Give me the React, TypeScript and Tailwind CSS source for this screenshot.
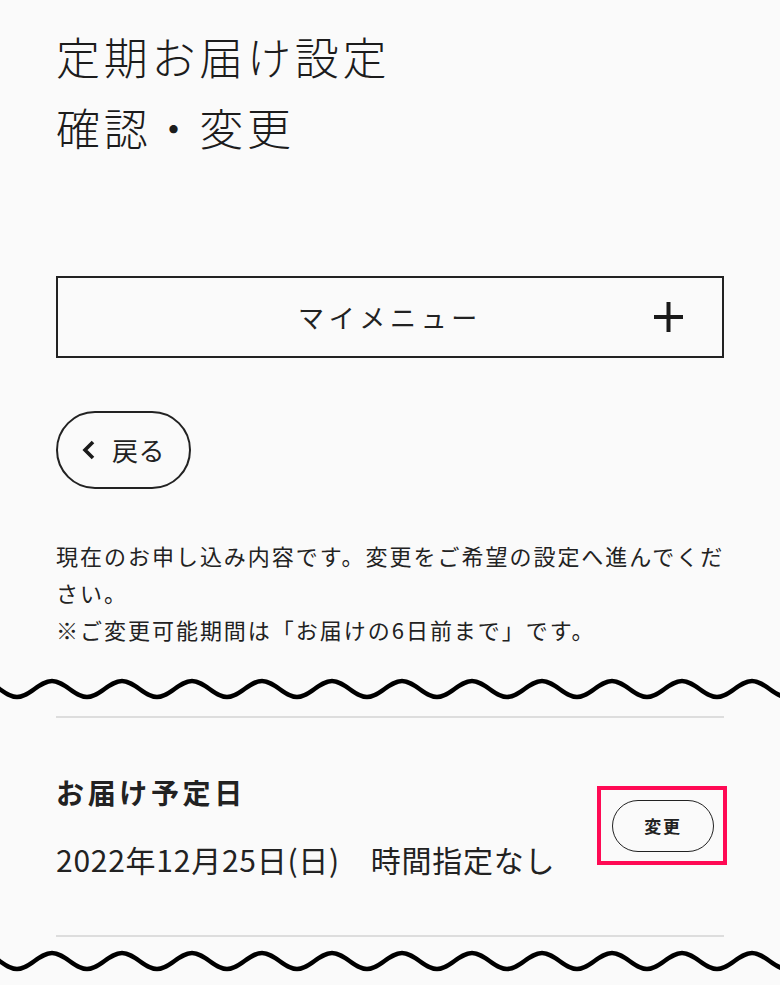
import React from "react";

function Wave() {
  const A = 8;
  const P = 70;
  const cy = 12;
  const h = P / 2;
  let x = -53;
  let up = true;
  let d = `M ${x} ${cy + A}`;
  while (x < 800) {
    const y0 = up ? cy + A : cy - A;
    const y1 = up ? cy - A : cy + A;
    d += ` C ${x + h * 0.3642} ${y0} ${x + h - h * 0.3642} ${y1} ${x + h} ${y1}`;
    x += h;
    up = !up;
  }
  return (
    <svg width="780" height="24" viewBox="0 0 780 24" className="block w-full">
      <path d={d} fill="none" stroke="#000" strokeWidth="4.5" />
    </svg>
  );
}

export default function App() {
  return (
    <div
      className="w-full min-h-[985px] bg-[#fafafa] text-[#222] overflow-hidden"
      style={{ fontFamily: '"Noto Sans CJK JP", "Noto Sans", sans-serif' }}
    >
      <div className="px-14 pt-[21px]">
        <h1 className="text-[44px] leading-[71px] tracking-[0.085em] font-light text-[#1c1c1c]">
          定期お届け設定
          <br />
          確認・変更
        </h1>

        <div className="mt-[113px] h-[82px] border-2 border-[#222] grid grid-cols-[1fr_auto_1fr] items-center">
          <div />
          <div className="text-[26px] tracking-[0.18em] leading-none">マイメニュー</div>
          <div className="flex justify-end pr-[39px]">
            <svg width="29" height="30" viewBox="0 0 29 30">
              <path d="M14.5 0 V30 M0 15 H29" stroke="#1a1a1a" strokeWidth="4" fill="none" />
            </svg>
          </div>
        </div>

        <div className="mt-[53px] w-[135px] h-[78px] rounded-full border-2 border-[#222] flex items-center pl-[24px]">
          <svg width="13" height="20" viewBox="0 0 13 20">
            <path d="M11 2 L3 10 L11 18" stroke="#1a1a1a" strokeWidth="3.6" fill="none" />
          </svg>
          <span className="ml-[17px] text-[26px] leading-none tracking-[0.02em]">戻る</span>
        </div>

        <p className="mt-[48px] mr-[-14px] text-[22px] leading-[37px] tracking-[0.09em]">
          現在のお申し込み内容です。変更をご希望の設定へ進んでください。
          <br />
          ※ご変更可能期間は「お届けの6日前まで」です。
        </p>
      </div>

      <div className="mt-[29px]">
        <Wave />
      </div>

      <div className="px-14">
        <div className="mt-[15px] h-[2px] bg-[#dddddd]" />
        <div className="flex items-center justify-between pt-[54px] pb-[56px]">
          <div>
            <div className="text-[28px] leading-[40px] font-bold tracking-[0.13em]">お届け予定日</div>
            <div className="mt-[27px] text-[30px] leading-[40px] tracking-[0.025em]">
              2022年12月25日(日)　時間指定なし
            </div>
          </div>
          <div className="relative mr-[10px]">
            <div className="w-[102px] h-[52px] rounded-full border-[1.5px] border-[#222] flex items-center justify-center text-[17px] font-bold tracking-[0.1em]">
              変更
            </div>
            <div className="absolute -left-[15px] -right-[13px] -top-[14px] -bottom-[13px] border-4 border-[#ff0a54] pointer-events-none" />
          </div>
        </div>
        <div className="h-[2px] bg-[#dddddd]" />
      </div>

      <div className="mt-[12px]">
        <Wave />
      </div>
    </div>
  );
}
